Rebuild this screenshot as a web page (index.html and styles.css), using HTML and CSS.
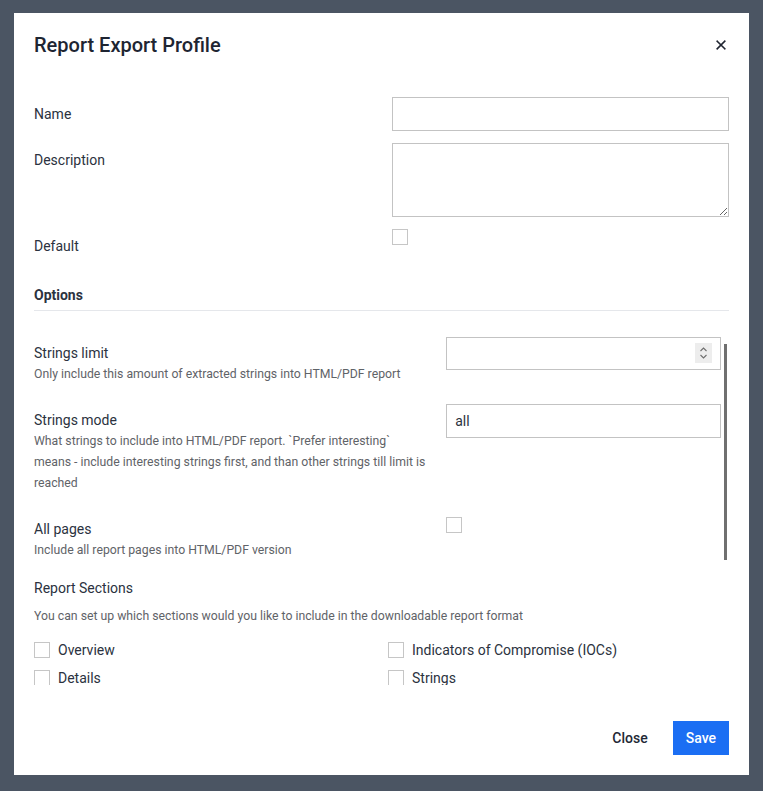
FILE: index.html
```html
<!DOCTYPE html>
<html lang="en">
<head>
<meta charset="utf-8">
<title>Report Export Profile</title>
<link rel="stylesheet" href="styles.css">
</head>
<body>
<div class="modal">
  <header class="modal-header">
    <h2 class="modal-title">Report Export Profile</h2>
    <button class="close-x" type="button" aria-label="Close">
      <svg width="10" height="10" viewBox="0 0 10 10"><path d="M1.2 1.2L8.8 8.8M8.8 1.2L1.2 8.8" stroke="#1f2430" stroke-width="1.6" stroke-linecap="square"/></svg>
    </button>
  </header>
  <div class="modal-body">
    <div class="form-row">
      <label class="form-label">Name</label>
      <input class="text-input" type="text">
    </div>
    <div class="form-row">
      <label class="form-label">Description</label>
      <textarea class="text-area"></textarea>
    </div>
    <div class="form-row">
      <label class="form-label">Default</label>
      <div class="check-wrap"><input class="checkbox" type="checkbox"></div>
    </div>
    <h3 class="section-title">Options</h3>
    <div class="scroll-wrap">
      <div class="scroll-area">
        <div class="opt-row">
          <div class="opt-text">
            <div class="opt-label">Strings limit</div>
            <div class="opt-help">Only include this amount of extracted strings into HTML/PDF report</div>
          </div>
          <div class="opt-control">
            <div class="number-wrap">
              <input class="text-input number-input" type="number">
              <span class="spinner" aria-hidden="true">
                <svg width="9" height="14" viewBox="0 0 9 14"><path d="M1.5 5L4.5 2L7.5 5M1.5 9L4.5 12L7.5 9" fill="none" stroke="#6e6e6e" stroke-width="1.1"/></svg>
              </span>
            </div>
          </div>
        </div>
        <div class="opt-row">
          <div class="opt-text">
            <div class="opt-label">Strings mode</div>
            <div class="opt-help">What strings to include into HTML/PDF report. `Prefer interesting` means - include interesting strings first, and than other strings till limit is reached</div>
          </div>
          <div class="opt-control"><input class="text-input" type="text" value="all"></div>
        </div>
        <div class="opt-row">
          <div class="opt-text">
            <div class="opt-label">All pages</div>
            <div class="opt-help">Include all report pages into HTML/PDF version</div>
          </div>
          <div class="opt-control"><div class="check-wrap"><input class="checkbox" type="checkbox"></div></div>
        </div>
        <div class="sections">
          <div class="sections-title">Report Sections</div>
          <div class="sections-help">You can set up which sections would you like to include in the downloadable report format</div>
          <div class="sections-grid">
            <label class="sec-item"><input class="checkbox" type="checkbox"><span>Overview</span></label>
            <label class="sec-item"><input class="checkbox" type="checkbox"><span>Indicators of Compromise (IOCs)</span></label>
            <label class="sec-item"><input class="checkbox" type="checkbox"><span>Details</span></label>
            <label class="sec-item"><input class="checkbox" type="checkbox"><span>Strings</span></label>
            <label class="sec-item"><input class="checkbox" type="checkbox"><span>Network</span></label>
            <label class="sec-item"><input class="checkbox" type="checkbox"><span>Behavior</span></label>
            <label class="sec-item"><input class="checkbox" type="checkbox"><span>Screenshots</span></label>
            <label class="sec-item"><input class="checkbox" type="checkbox"><span>MITRE ATT&amp;CK</span></label>
          </div>
        </div>
      </div>
      <div class="scroll-thumb" aria-hidden="true"></div>
    </div>
  </div>
  <footer class="modal-footer">
    <button class="btn btn-link" type="button">Close</button>
    <button class="btn btn-primary" type="button">Save</button>
  </footer>
</div>
</body>
</html>
```
FILE: styles.css
```css
* { box-sizing: border-box; }

html, body {
  margin: 0;
  padding: 0;
}

body {
  background: #4b5563;
  padding: 13px 14px;
  font-family: Roboto, "Liberation Sans", Arial, sans-serif;
  color: #2b3240;
}

.modal {
  width: 735px;
  background: #ffffff;
  display: flex;
  flex-direction: column;
}

.modal-header {
  display: flex;
  align-items: center;
  justify-content: space-between;
  padding: 20px 20px 0 20px;
}

.modal-title {
  margin: 0;
  font-size: 20px;
  line-height: 24px;
  font-weight: 500;
  color: #1e2532;
}

.close-x {
  border: 0;
  background: transparent;
  padding: 0;
  width: 16px;
  height: 16px;
  display: flex;
  align-items: center;
  justify-content: center;
  cursor: pointer;
}

.modal-body {
  padding: 40px 20px 0 20px;
}

.form-row {
  display: grid;
  grid-template-columns: 358px 1fr;
  margin-bottom: 12px;
}

.form-label {
  font-size: 14px;
  line-height: 20px;
  padding-top: 7px;
  color: #2b3240;
}

.text-input {
  width: 100%;
  height: 34px;
  border: 1px solid #c3c3c3;
  border-radius: 0;
  padding: 0 8px;
  font-family: Roboto, "Liberation Sans", Arial, sans-serif;
  font-size: 14px;
  color: #2b3240;
  background: #fff;
  outline: none;
  display: block;
}

.number-wrap {
  position: relative;
}

.number-input {
  height: 33px;
  -moz-appearance: textfield;
  appearance: textfield;
}

.number-input::-webkit-inner-spin-button,
.number-input::-webkit-outer-spin-button {
  -webkit-appearance: none;
  margin: 0;
}

.spinner {
  position: absolute;
  top: 6px;
  right: 9px;
  width: 17px;
  height: 20px;
  background: #ededed;
  display: flex;
  align-items: center;
  justify-content: center;
}

.text-area {
  width: 100%;
  height: 74px;
  border: 1px solid #c3c3c3;
  border-radius: 0;
  padding: 6px 8px;
  font-family: Roboto, "Liberation Sans", Arial, sans-serif;
  font-size: 14px;
  resize: vertical;
  display: block;
}

.check-wrap {
  height: 34px;
}

.checkbox {
  -webkit-appearance: none;
  appearance: none;
  width: 16px;
  height: 16px;
  margin: 0;
  border: 1px solid #c6c6c6;
  border-radius: 0;
  background: #fff;
  display: block;
  flex: none;
}

.section-title {
  margin: 22px 0 0 0;
  font-size: 14px;
  line-height: 20px;
  font-weight: 700;
  color: #2b3240;
  padding-bottom: 5px;
  border-bottom: 1px solid #e5e7eb;
}

.scroll-wrap {
  position: relative;
  margin-top: 25px;
}

.scroll-area {
  height: 349px;
  overflow-y: auto;
  scrollbar-width: none;
  padding-right: 8px;
}

.scroll-area::-webkit-scrollbar {
  display: none;
}

.scroll-thumb {
  position: absolute;
  right: 2px;
  top: 8px;
  width: 3px;
  height: 216px;
  background: #707070;
}

.opt-row {
  display: grid;
  grid-template-columns: 60% 40%;
  margin-top: 18px;
}

.opt-row:first-child {
  margin-top: 0;
}

.opt-text {
  padding-top: 7px;
  padding-right: 20px;
}

.opt-control {
  padding-top: 1px;
}

.opt-label {
  font-size: 14px;
  line-height: 20px;
  color: #2b3240;
}

.opt-help {
  margin-top: 1px;
  font-size: 12.25px;
  line-height: 21px;
  color: #5f6368;
}

.opt-control .check-wrap {
  padding-top: 4px;
}

.sections {
  margin-top: 17px;
}

.sections-title {
  font-size: 14px;
  line-height: 20px;
  color: #2b3240;
}

.sections-help {
  margin-top: 8px;
  font-size: 12.25px;
  line-height: 21px;
  color: #5f6368;
}

.sections-grid {
  margin-top: 9px;
  display: grid;
  grid-template-columns: 354px 1fr;
}

.sec-item {
  display: flex;
  align-items: center;
  gap: 8px;
  height: 28px;
  font-size: 14px;
  color: #2b3240;
}

.modal-footer {
  display: flex;
  justify-content: flex-end;
  gap: 12px;
  padding: 36px 20px 20px 20px;
}

.btn {
  height: 34px;
  padding: 0 13px;
  border: 0;
  border-radius: 0;
  font-family: Roboto, "Liberation Sans", Arial, sans-serif;
  font-size: 14px;
  font-weight: 500;
  cursor: pointer;
}

.btn-link {
  background: transparent;
  color: #222835;
}

.btn-primary {
  background: #1b6ef3;
  color: #ffffff;
}
```
